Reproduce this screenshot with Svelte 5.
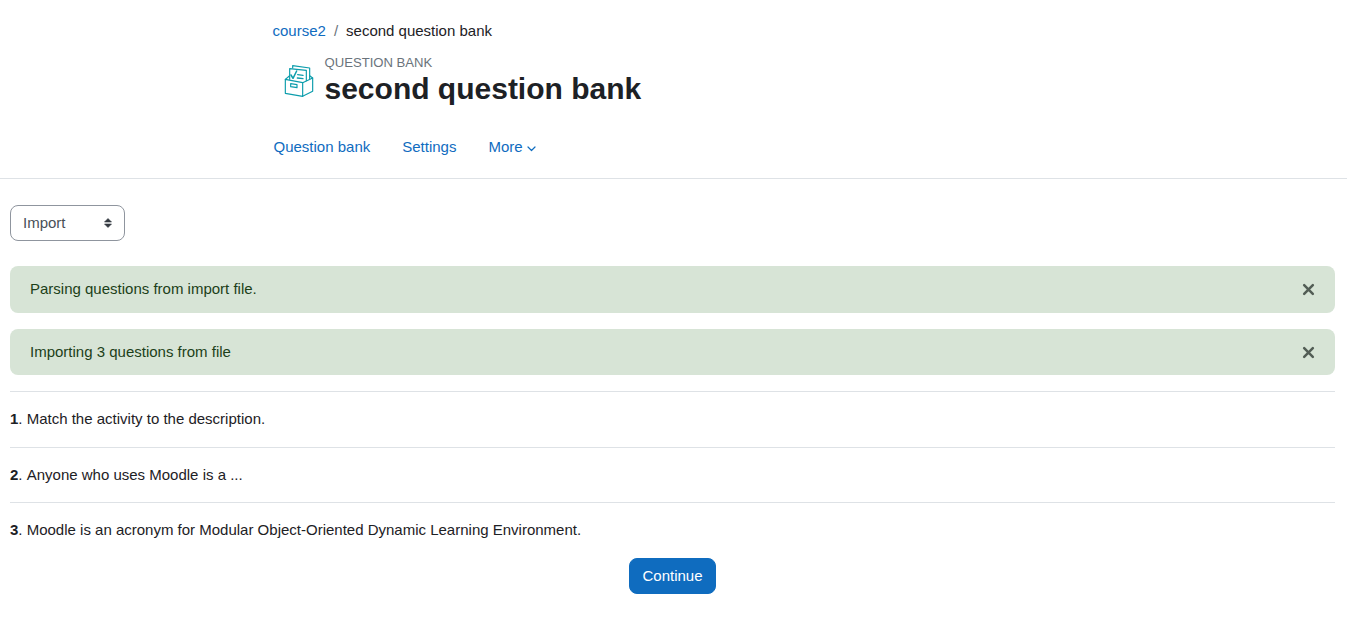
<script>
    let notices = $state([
        {id: 1, text: 'Parsing questions from import file.'},
        {id: 2, text: 'Importing 3 questions from file'}
    ]);

    const questions = [
        'Match the activity to the description.',
        'Anyone who uses Moodle is a ...',
        'Moodle is an acronym for Modular Object-Oriented Dynamic Learning Environment.'
    ];

    function dismiss(id) {
        notices = notices.filter(n => n.id !== id);
    }
</script>

<header>
    <div class="header-inner">
        <nav class="breadcrumb">
            <a href="#course">course2</a>
            <span class="divider">/</span>
            <span>second question bank</span>
        </nav>
        <div class="heading">
            <svg class="activity-icon" viewBox="0 0 144 144" fill="none" stroke="#0c9dac" stroke-width="3.5" stroke-linejoin="round" stroke-linecap="round">
                <path d="M28 70 80 80V121L28 112Z"/>
                <path d="M80 80 110 66V106L80 121"/>
                <path d="M28 70 40 60M101 59 110 66"/>
                <path d="M41 70V38L91 43V74"/>
                <path d="M50 36V29L101 36V68"/>
                <path d="M45 57 51 67 62 45" stroke-width="4.5"/>
                <path d="M65 56 81 58M64 66 81 68" stroke-width="4"/>
                <path d="M44 83 63 86V95L44 92Z"/>
            </svg>
            <div class="title">
                <div class="kind">Question bank</div>
                <h1>second question bank</h1>
            </div>
        </div>
        <nav class="tabs">
            <a href="#bank">Question bank</a>
            <a href="#settings">Settings</a>
            <a href="#more">More<svg class="chevron" viewBox="0 0 9 6"><path d="M1 1 4.5 4.5 8 1" fill="none" stroke="currentColor" stroke-width="1.2" stroke-linecap="round" stroke-linejoin="round"/></svg></a>
        </nav>
    </div>
</header>

<main>
    <button class="select">
        Import
        <svg viewBox="0 0 8 10"><path d="M4 .5 7.5 4H.5ZM.5 6H7.5L4 9.5Z" fill="#343a40" stroke="#343a40" stroke-width=".6" stroke-linejoin="round"/></svg>
    </button>

    {#each notices as notice (notice.id)}
        <div class="alert">
            {notice.text}
            <button class="close" aria-label="Dismiss" onclick={() => dismiss(notice.id)}>
                <svg viewBox="0 0 12 12"><path d="M2 2 10 10M10 2 2 10" stroke="#525d55" stroke-width="2.3" stroke-linecap="round"/></svg>
            </button>
        </div>
    {/each}

    {#each questions as question, i}
        <hr>
        <p><b>{i + 1}</b>. <span class="question">{question}</span></p>
    {/each}

    <div class="actions">
        <button class="primary">Continue</button>
    </div>
</main>

<style>
    :global(body) {
        background: #fff;
        color: #1d2125;
        font-family: "Liberation Sans", Arial, sans-serif;
        font-size: 15px;
        line-height: 1.5;
    }

    a {
        color: #0f6cbf;
        text-decoration: none;
    }

    button {
        font: inherit;
        cursor: pointer;
    }

    header {
        box-sizing: border-box;
        height: 179px;
        border-bottom: 1px solid #dee2e6;
    }

    .header-inner {
        width: 802px;
        margin: 0 auto;
        padding-top: 19.5px;
    }

    .breadcrumb {
        display: flex;
    }

    .divider {
        color: #6a737b;
        padding: 0 8px;
    }

    .heading {
        display: flex;
        height: 60px;
        margin-top: 10px;
    }

    .activity-icon {
        width: 48px;
        height: 48px;
        margin: 4px 0.5px 0 3.5px;
    }

    .title {
        padding-top: 1px;
    }

    .kind {
        color: #6a737b;
        font-size: 13.125px;
        line-height: 20px;
        text-transform: uppercase;
    }

    h1 {
        margin: -2px 0 0;
        font-size: 30px;
        line-height: 36px;
    }

    .tabs {
        display: flex;
        gap: 32px;
        margin: 24px 0 0 1px;
    }

    .chevron {
        width: 9px;
        height: 6px;
        margin-left: 4px;
        vertical-align: 0.5px;
    }

    main {
        padding: 26px 12px 0 10px;
    }

    .select {
        display: flex;
        align-items: center;
        justify-content: space-between;
        box-sizing: border-box;
        width: 115px;
        height: 36px;
        margin-bottom: 25px;
        padding: 0 12px;
        border: 1px solid #8f959e;
        border-radius: 8px;
        background: #fff;
        color: #495057;
    }

    .select svg {
        width: 8px;
        height: 10px;
    }

    .alert {
        display: flex;
        align-items: center;
        justify-content: space-between;
        margin-bottom: 16px;
        padding: 12px 20px;
        border-radius: 8px;
        background: #d7e4d6;
        color: #1c3f19;
    }

    .close {
        display: flex;
        padding: 1px 0 0;
        border: none;
        background: none;
    }

    .close svg {
        width: 13px;
        height: 13px;
    }

    hr {
        margin: 16px 0;
        border: none;
        border-top: 1px solid #dee2e6;
    }

    p {
        margin: 16px 0;
    }

    .question {
        display: inline-block;
    }

    .actions {
        display: flex;
        justify-content: center;
    }

    .primary {
        height: 36.5px;
        padding: 0 12.5px;
        border: 1px solid #0f6cbf;
        border-radius: 8px;
        background: #0f6cbf;
        color: #fff;
    }
</style>
